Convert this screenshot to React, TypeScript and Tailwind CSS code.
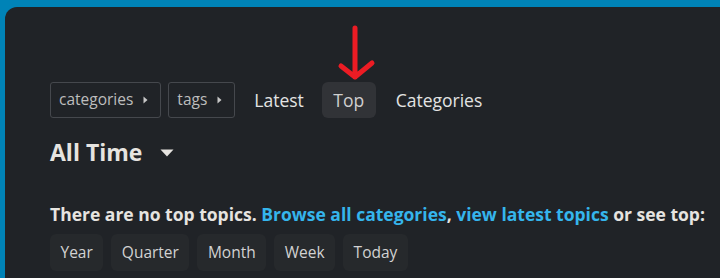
import React from 'react';

const periods = ['Year', 'Quarter', 'Month', 'Week', 'Today'];

const CaretRight: React.FC = () => (
  <svg width="5" height="10" viewBox="0 0 5 10" className="ml-[10px]" aria-hidden="true">
    <path d="M0.5 1.5 L4.5 5 L0.5 8.5 Z" fill="#c8c8c8" />
  </svg>
);

const TopEmpty: React.FC = () => {
  return (
    <div className="h-[278px] overflow-hidden bg-[#0083b7] pl-[5px] pt-[7px] font-['Open_Sans',sans-serif]">
      <div className="relative h-[300px] rounded-tl-[12px] bg-[#202327] pl-[45px] pt-[75px]">
        {/* annotation arrow pointing at the Top tab */}
        <svg
          className="absolute left-[328px] top-[12px]"
          width="48"
          height="64"
          viewBox="0 0 48 64"
          aria-hidden="true"
        >
          <path
            d="M22 9 L22 58 M8 47 L22 58 L39 44"
            stroke="#ec1c24"
            strokeWidth="5"
            strokeLinecap="round"
            strokeLinejoin="round"
            fill="none"
          />
        </svg>

        <div className="flex h-[36px] items-center">
          <button className="flex h-[36px] items-center rounded-[3px] border border-[#45484d] pl-[8px] pr-[12px] text-[15.5px] text-[#bdbdbd]">
            categories
            <CaretRight />
          </button>
          <button className="ml-[7px] flex h-[36px] items-center rounded-[3px] border border-[#45484d] pl-[8px] pr-[12px] text-[15.5px] text-[#bdbdbd]">
            tags
            <CaretRight />
          </button>
          <span className="ml-[19px] text-[17.5px] text-[#e3e3e3]">Latest</span>
          <span className="ml-[18px] flex h-[36px] items-center rounded-[6px] bg-[#313337] px-[11.5px] text-[17.5px] text-[#cfcfcf]">
            Top
          </span>
          <span className="ml-[20px] text-[17.5px] text-[#e3e3e3]">Categories</span>
        </div>

        <div className="mt-[16px] flex h-[36px] items-center">
          <span className="text-[23px] font-bold text-[#e6e4e0]">All Time</span>
          <svg width="14" height="8" viewBox="0 0 14 8" className="ml-[18px] mt-[1px]" aria-hidden="true">
            <path d="M0.5 0.5 L13.5 0.5 L7 7.5 Z" fill="#e6e4e0" />
          </svg>
        </div>

        <p className="mt-[33px] text-[17.5px] font-bold leading-[22px] text-[#e6e4e0]">
          There are no top topics.{' '}
          <span className="text-[#35b5ec]">Browse all categories</span>,{' '}
          <span className="text-[#35b5ec]">view latest topics</span> or see top:
        </p>

        <div className="mt-[9px] flex gap-[8px]">
          {periods.map((p) => (
            <button
              key={p}
              className="h-[37px] rounded-[6px] bg-[#26292c] px-[10.5px] text-[15.5px] text-[#d2d2d2]"
            >
              {p}
            </button>
          ))}
        </div>
      </div>
    </div>
  );
};

export default function App() {
  return <TopEmpty />;
}
